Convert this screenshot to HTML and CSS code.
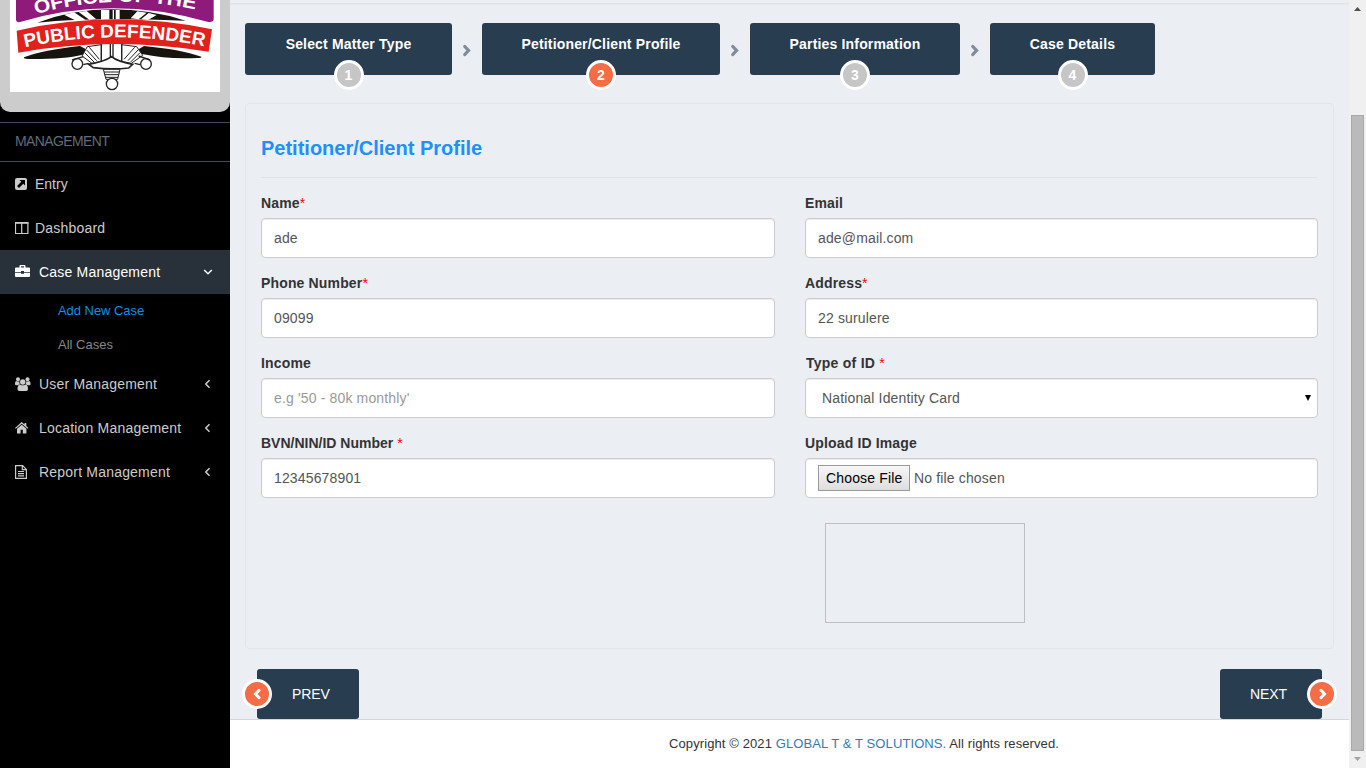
FILE: index.html
```html
<!DOCTYPE html>
<html lang="en">
<head>
<meta charset="utf-8">
<title>Petitioner/Client Profile</title>
<link rel="stylesheet" href="styles.css">
</head>
<body>
<div class="app">
  <aside class="sidebar">
    <div class="brand">
      <svg class="logo" viewBox="30 0 630 276" width="210" height="92">
        <defs>
          <path id="arc-top" d="M107 43Q340 -24 588 29"/>
          <path id="arc-mid" d="M75 142Q342 84 612 139"/>
        </defs>
        <rect x="30" y="0" width="630" height="276" fill="#fff"/>
        <path d="M112 68Q220 28 335 28T557 62Q450 58 335 58T112 68Z" fill="#17130f"/>
        <path d="M192 44l30-7 34 22-26 4zM236 36l24-3 28 24-20 2zM303 30h25v29h-25zM338 30h4v29h-4zM347 30h12v29h-12zM412 34l28 4-24 20-24-3zM446 39l24 6-26 15-20-3z" fill="#fff"/>
        <path d="M48 -10V60Q48 68 60 66Q335 -16 625 66Q640 68 641 58V-10Z" fill="#8e1a7c"/>
        <path d="M72 172Q130 150 240 138L262 150L248 164Q190 178 84 177Q70 177 72 172Z" fill="#17130f"/>
        <path d="M604 170Q540 148 432 138L412 150L426 162Q500 178 592 174Q606 174 604 170Z" fill="#17130f"/>
        <g fill="#fff" stroke="#222" stroke-width="3">
          <path d="M262 140L304 134V184L276 190L246 168Z"/>
          <path d="M410 140L365 134V184L394 190L428 166Z"/>
          <path d="M254 158l28 28M260 150l30 32M268 142l30 36M420 158l-28 28M414 150l-30 32M404 142l-32 36" />
          <path d="M304 132V186H365V132M331 132V176M339 132V176" stroke-width="4"/>
          <circle cx="232" cy="192" r="16" stroke-width="4"/><circle cx="438" cy="192" r="16" stroke-width="4"/>
          <path d="M216 180l34-10M450 180l-34-12M250 194l16-4M420 194l-16-4" stroke-width="4"/>
          <path d="M266 193Q315 184 335 170Q350 184 398 193L386 204Q335 210 280 203Z" stroke-width="5"/>
          <path d="M310 208H360L353 238H318Z"/>
          <path d="M312 216h46M314 224h42M316 232h38"/>
          <circle cx="336" cy="252" r="17" stroke-width="4"/>
        </g>
        <path d="M50 92Q340 26 636 88L626 155Q335 108 55 158Z" fill="#e2211d"/>
        <text class="logo-text" font-size="57"><textPath href="#arc-top" textLength="484" lengthAdjust="spacingAndGlyphs">OFFICE OF THE</textPath></text>
        <text class="logo-text" font-size="56"><textPath href="#arc-mid" textLength="542" lengthAdjust="spacingAndGlyphs">PUBLIC DEFENDER</textPath></text>
      </svg>
    </div>
    <div class="menu-title">MANAGEMENT</div>
    <nav class="menu">
      <a class="item">
        <svg class="icon" width="12" height="12" viewBox="0 0 12 12"><rect width="12" height="12" rx="2" fill="currentColor"/><path d="M4.500 2h5.500v5.500L8.300 5.800 4 10 2 8 6.300 3.700z" fill="#000"/></svg>
        <span class="near">Entry</span></a>
      <a class="item">
        <svg class="icon" width="14" height="12" viewBox="0 0 14 12"><path d="M.5 1h12.400v10.500H.5zM6.700 1v10.500" fill="none" stroke="currentColor" stroke-width="1.200"/><path d="M0 .8h13.500" stroke="currentColor" stroke-width="1.600"/></svg>
        <span class="near wide">Dashboard</span></a>
      <a class="item active">
        <svg class="icon up" width="15" height="13" viewBox="0 0 15 13"><path d="M4.500 2.500V1q0-1 1-1h4q1 0 1 1v1.500H14q1 0 1 1V7H9V6H6v1H0V3.500q0-1 1-1zM6 1.200v1.300h3V1.200zM0 7.700h6v1h3v-1h6V11q0 1-1 1H1q-1 0-1-1z" fill="currentColor" fill-rule="evenodd"/></svg>
        <span class="label">Case Management</span>
        <svg class="arrow" width="10" height="10" viewBox="0 0 10 10"><path d="M1.200 3l3.800 3.700L8.800 3" /></svg></a>
      <div class="submenu">
        <a class="sub current">Add New Case</a>
        <a class="sub">All Cases</a>
      </div>
      <a class="item">
        <svg class="icon" width="16" height="14" viewBox="0 0 16 14"><g fill="currentColor"><circle cx="3" cy="2.200" r="2"/><circle cx="12.500" cy="2.200" r="2"/><path d="M0 7q0-3 1.500-3 1.500 1 3 .3Q4 6.500 5 7.200 3.500 7.600 2.600 8.300H1Q0 8.300 0 7zM15.500 7q0-3-1.500-3-1.500 1-3 .3.500 2.200-.5 2.900 1.500.4 2.400 1.100h1.600q1 0 1-1.300z"/><circle cx="7.750" cy="5" r="2.700"/><path d="M2.500 12q0-4.500 2.600-4.500 2.600 1.700 5.300 0Q13 7.500 13 12q0 2-1.800 2H4.300q-1.800 0-1.800-2z"/></g></svg>
        <span class="label">User Management</span>
        <svg class="arrow" width="10" height="10" viewBox="0 0 10 10"><path d="M6.500 1.200L2.800 5l3.700 3.800"/></svg></a>
      <a class="item">
        <svg class="icon" width="14" height="12" viewBox="0 0 14 12"><path d="M6.700 0L9.500 2.500V1h1.800v3L13.400 6l-.8.8L6.700 1.800.8 6.800 0 6zM2 6.700l4.700-4 4.700 4V11.500H7.800V7.800H5.600v3.700H2z" fill="currentColor"/></svg>
        <span class="label">Location Management</span>
        <svg class="arrow" width="10" height="10" viewBox="0 0 10 10"><path d="M6.500 1.200L2.800 5l3.700 3.800"/></svg></a>
      <a class="item">
        <svg class="icon" width="12" height="14" viewBox="0 0 12 14"><path d="M.6.600h7L11.400 4.400v9H.6zM7.300.600v4h4M3 6.500h6M3 8.700h6M3 10.900h6" fill="none" stroke="currentColor" stroke-width="1.200"/></svg>
        <span class="label">Report Management</span>
        <svg class="arrow" width="10" height="10" viewBox="0 0 10 10"><path d="M6.500 1.200L2.800 5l3.700 3.800"/></svg></a>
    </nav>
  </aside>

  <div class="main">
    <div class="topline"></div>
    <section class="content">
      <div class="steps">
        <div class="step s1">Select Matter Type<span class="num">1</span></div>
        <svg class="sep" viewBox="0 0 30 20"><path d="M12.800 5.500l3.700 4-3.700 4"/></svg>
        <div class="step s2">Petitioner/Client Profile<span class="num on">2</span></div>
        <svg class="sep" viewBox="0 0 30 20"><path d="M12.800 5.500l3.700 4-3.700 4"/></svg>
        <div class="step s3">Parties Information<span class="num">3</span></div>
        <svg class="sep" viewBox="0 0 30 20"><path d="M12.800 5.500l3.700 4-3.700 4"/></svg>
        <div class="step s4">Case Details<span class="num">4</span></div>
      </div>

      <div class="panel">
        <h2 class="title">Petitioner/Client Profile</h2>
        <div class="fields">
          <div class="field"><div class="caption">Name<i>*</i></div><div class="control">ade</div></div>
          <div class="field"><div class="caption">Email</div><div class="control">ade@mail.com</div></div>
          <div class="field"><div class="caption">Phone Number<i>*</i></div><div class="control">09099</div></div>
          <div class="field"><div class="caption">Address<i>*</i></div><div class="control">22 surulere</div></div>
          <div class="field"><div class="caption">Income</div><div class="control hint">e.g '50 - 80k monthly'</div></div>
          <div class="field"><div class="caption type">Type of ID <i>*</i></div><div class="control select">National Identity Card<svg class="caret" width="6" height="6" viewBox="0 0 6 6"><path d="M0 0h6L3 6z" fill="#000"/></svg></div></div>
          <div class="field"><div class="caption tight">BVN/NIN/ID Number <i>*</i></div><div class="control">12345678901</div></div>
          <div class="field"><div class="caption">Upload ID Image</div><div class="control"><span class="choose">Choose File</span>No file chosen</div></div>
          <div class="preview"></div>
        </div>
      </div>

      <div class="pager">
        <div class="page prev">PREV<span class="knob"><svg width="27" height="24" viewBox="0 0 27 24"><path d="M15 8.300L11.500 12l3.500 3.700"/></svg></span></div>
        <div class="page next">NEXT<span class="knob"><svg width="27" height="24" viewBox="0 0 27 24"><path d="M12 8.300l3.500 3.700-3.500 3.700"/></svg></span></div>
      </div>
    </section>
    <footer class="footer"><span>Copyright © 2021 <a>GLOBAL T &amp; T SOLUTIONS.</a> All rights reserved.</span></footer>
  </div>

  <div class="scrollbar">
    <svg class="tip" width="17" height="17" viewBox="0 0 17 17"><path d="M5 11h7L8.500 7z" fill="#505050"/></svg>
    <div class="thumb"></div>
    <svg class="tip" width="17" height="17" viewBox="0 0 17 17"><path d="M5 6h7L8.500 10z" fill="#a3a3a3"/></svg>
  </div>
</div>
</body>
</html>
```
FILE: styles.css
```css
* { box-sizing: border-box; }
body {
  margin: 0;
  font: 14px/20px "Liberation Sans", Arial, sans-serif;
  color: #333;
  overflow: hidden;
}
svg { display: block; flex: none; }
.app { display: flex; width: 1366px; height: 768px; background: #ebeef3; }

.sidebar { width: 230px; background: #000; color: #ccc; }
.brand { height: 112px; padding: 0 10px; background: #ccc; border-radius: 0 0 10px 10px; }
.logo-text { fill: #fff; font-family: "Liberation Sans", Arial, sans-serif; font-weight: bold; }
.menu-title {
  height: 40px; margin-top: 10px; padding-left: 15px; line-height: 37px; letter-spacing: -.62px;
  color: #606c78; border-top: 1px solid #414d5a; border-bottom: 1px solid #414d5a;
}
.item { display: flex; align-items: center; height: 44px; padding: 0 17px 0 15px; letter-spacing: .2px; }
.item span { flex: 1; white-space: nowrap; }
.icon { margin-right: -16px; }
.near { padding-left: 24px; }
.icon[width="14"] + .near { padding-left: 22px; }
.icon[width="12"] + .near { letter-spacing: 0; }
.icon[width="12"] + .label { padding-left: 28px; }
.icon[width="14"] + .label { padding-left: 26px; }
.icon[width="15"] + .label { padding-left: 25px; }
.icon[width="16"] + .label { padding-left: 24px; }
.icon.up { position: relative; top: -1px; }
.active { background: #28303a; color: #fff; }
.arrow { fill: none; stroke: currentColor; stroke-width: 1.5; }
.submenu { height: 68px; }
.sub { display: block; height: 34px; padding-left: 58px; font-size: 13px; line-height: 33px; color: #888; }
.current { color: #0c90e7; letter-spacing: -.05px; }

.main { width: 1119px; display: flex; flex-direction: column; }
.topline { height: 4px; border-bottom: 1px solid #e1e5e9; box-shadow: 0 1px 1px #e5e9ed; }
.content { height: 715px; padding: 19px 15px 0; }
.steps { display: flex; height: 80px; }
.step {
  position: relative; height: 52px; padding-top: 11px; text-align: center; letter-spacing: .17px;
  color: #fff; font-weight: bold; background: #293d50; border-radius: 3px; white-space: nowrap;
}
.s1 { width: 207px; }
.s2 { width: 238px; }
.s3 { width: 210px; }
.s4 { width: 165px; }
.num {
  position: absolute; left: 50%; bottom: -15px; width: 30px; height: 30px; margin-left: -15px;
  border: 3px solid #fff; border-radius: 50%; background: #c6c6c6; line-height: 24px; font-size: 14px;
}
.on { background: #f66c45; }
.sep { width: 30px; height: 20px; margin-top: 18px; fill: none; stroke: #7d8d9c; stroke-width: 3.3; stroke-linecap: round; }

.panel { height: 546px; padding: 0 15px; border: 1px solid #e2e5e9; border-radius: 4px; }
.title {
  height: 74px; margin: 0 0 15px; padding-top: 32px; font-size: 20px; line-height: 24px;
  color: #1e90ff; border-bottom: 1px solid #e0e4e8;
}
.fields { display: grid; grid-template-columns: 514px 513px; column-gap: 30px; }
.field { height: 80px; letter-spacing: .15px; }
.caption { height: 25px; font-weight: bold; }
.caption i { font-weight: normal; font-style: normal; color: #f00; }
.caption.type { padding-left: 1px; letter-spacing: .25px; }
.caption.tight { letter-spacing: 0; }
.control {
  display: flex; align-items: center; height: 40px; padding: 0 12px; color: #555;
  background: #fff; border: 1px solid #ccc; border-radius: 4px;
  box-shadow: inset 0 1px 1px rgba(0,0,0,.075);
}
.hint { color: #999; }
.select { justify-content: space-between; padding: 0 6px 0 16px; }
.choose {
  width: 92px; height: 26px; margin-right: 4px; padding-left: 7px; line-height: 24px; color: #000; white-space: nowrap;
  border: 1px solid #999; background: linear-gradient(#f6f6f6, #dedede);
}
.preview { grid-column: 2; width: 200px; height: 100px; margin: 10px 0 0 20px; border: 1px solid #bfbfbf; }

.pager { display: flex; justify-content: space-between; padding: 20px 12px 0; }
.page { position: relative; width: 102px; height: 50px; line-height: 50px; color: #fff; background: #293d50; border-radius: 3px; letter-spacing: -.1px; }
.prev { padding-left: 35px; }
.next { padding-left: 30px; }
.knob {
  position: absolute; top: 10px; width: 30px; height: 30px; display: flex; justify-content: center;
  border: 3px solid #fff; border-radius: 50%; background: #f66c45;
}
.knob path { fill: none; stroke: #fff; stroke-width: 3; stroke-linecap: round; }
.prev .knob { left: -15px; }
.next .knob { right: -15px; }
.footer {
  flex: 1; border-top: 1px solid #d2d6de; background: #fff; text-align: center;
  font-size: 13px; line-height: 47px; padding-left: 149px; letter-spacing: .1px;
}
.footer a { color: #337ab7; }

.scrollbar { width: 17px; display: flex; flex-direction: column; background: #f0f0f0; }
.scrollbar .thumb { width: 13px; height: 636px; margin: 98px 2px 0; background: #bababa; border: 1px solid #a8a8a8; }
```
